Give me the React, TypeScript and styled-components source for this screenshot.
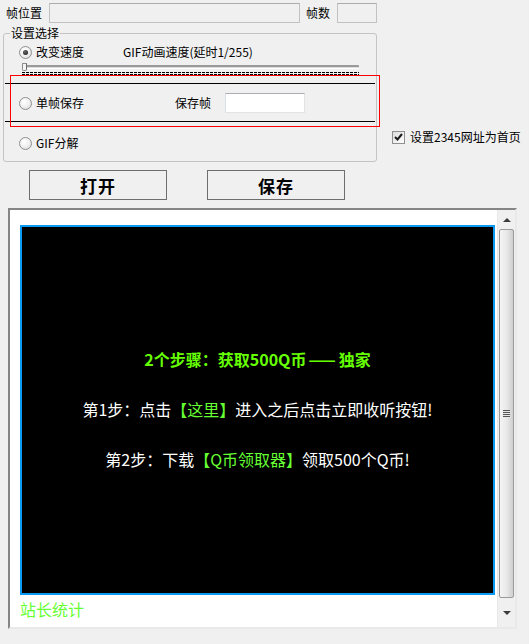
import React from 'react'
import styled, { createGlobalStyle } from 'styled-components'

const GlobalStyle = createGlobalStyle`
  html, body {
    margin: 0;
    padding: 0;
    background: #f0f0f0;
  }
  body {
    font-family: "Noto Sans CJK SC", "Liberation Sans", sans-serif;
    font-size: 12px;
    color: #000;
  }
  #root {
    width: 529px;
    height: 644px;
    overflow: hidden;
  }
`

const Window = styled.div`
  position: relative;
  width: 529px;
  height: 644px;
  padding-top: 3px;
  box-sizing: border-box;
  display: flex;
  flex-direction: column;
  background: #f0f0f0;
`

const TopRow = styled.div`
  display: flex;
  align-items: center;
  height: 20px;
  padding-left: 6px;
`

const Label = styled.span<{ $width?: number; $gap?: number }>`
  display: inline-block;
  width: ${({ $width }) => ($width ? `${$width}px` : 'auto')};
  margin-left: ${({ $gap }) => $gap ?? 0}px;
  flex: none;
  font-size: 12px;
  line-height: 16px;
  white-space: nowrap;
`

const ReadOnlyField = styled.div<{ $width: number }>`
  width: ${({ $width }) => $width}px;
  height: 20px;
  box-sizing: border-box;
  border: 1px solid #c2c2c2;
  border-top-color: #adadad;
  background: #f0f0f0;
  flex: none;
`

const Middle = styled.div`
  display: flex;
  margin-top: 3px;
  padding-left: 3px;
`

const GroupBox = styled.fieldset`
  margin: 0;
  padding: 0 0 10px;
  width: 374px;
  box-sizing: border-box;
  border: 1px solid #c4c4c4;
  border-radius: 3px;
  display: flex;
  flex-direction: column;

  & > legend {
    margin-left: 6px;
    padding: 0 1px;
    font-size: 12px;
    line-height: 14px;
  }
`

const OptionRow = styled.div<{ $top: number; $height: number }>`
  display: flex;
  align-items: center;
  height: ${({ $height }) => $height}px;
  margin-top: ${({ $top }) => $top}px;
  padding-left: 15px;
`

const RadioLabel = styled.label<{ $width?: number }>`
  display: flex;
  align-items: center;
  gap: 4px;
  width: ${({ $width }) => ($width ? `${$width}px` : 'auto')};
  flex: none;
  line-height: 16px;
`

const RadioCircle = styled.span<{ $checked?: boolean }>`
  position: relative;
  width: 13px;
  height: 13px;
  box-sizing: border-box;
  border-radius: 50%;
  border: 1px solid #8f8f8f;
  background: radial-gradient(circle at 40% 35%, #ffffff 0%, #f2f2f2 45%, #d4d4d4 100%);
  flex: none;

  &::after {
    content: '';
    display: ${({ $checked }) => ($checked ? 'block' : 'none')};
    position: absolute;
    left: 3px;
    top: 3px;
    width: 5px;
    height: 5px;
    border-radius: 50%;
    background: radial-gradient(circle at 40% 35%, #6a6a6a, #111);
  }
`

const Slider = styled.div`
  position: relative;
  margin: 2px 0 0 18px;
  width: 337px;
  height: 14px;
`

const SliderTrack = styled.div`
  position: absolute;
  left: 0;
  right: 0;
  top: 3px;
  height: 4px;
  box-sizing: border-box;
  border-top: 2px solid #9a9a9a;
  border-bottom: 1px solid #ffffff;
  background: #dcdcdc;
  border-radius: 1px;
`

const SliderThumb = styled.div`
  position: absolute;
  left: 0;
  top: 1px;
  width: 5px;
  height: 8px;
  box-sizing: border-box;
  border: 1px solid #8a8a8a;
  border-right-color: #6a6a6a;
  background: #f4f4f4;
  border-radius: 1px 1px 2px 2px;
`

const SliderTicks = styled.div`
  position: absolute;
  left: 0;
  right: 0;
  top: 10px;
  height: 3px;
  background:
    repeating-linear-gradient(90deg, #000 0 3px, transparent 3px 4px) 0 0 / 100% 1px no-repeat,
    repeating-linear-gradient(90deg, #000 0 3px, transparent 3px 4px) 0 2px / 100% 1px no-repeat;
`

const Separator = styled.div<{ $top: number }>`
  height: 1px;
  margin: ${({ $top }) => $top}px 0 0 1px;
  width: 370px;
  background: #000;
`

const EditField = styled.div`
  width: 80px;
  height: 20px;
  box-sizing: border-box;
  border: 1px solid #e3e3e3;
  border-top-color: #abadb3;
  border-left-color: #dbdfe6;
  background: #fff;
  flex: none;
`

const CheckOption = styled.label`
  align-self: flex-end;
  display: flex;
  align-items: center;
  gap: 5px;
  margin: 0 0 18px 15px;
  line-height: 14px;
  white-space: nowrap;
`

const CheckBoxBox = styled.span`
  display: flex;
  align-items: center;
  justify-content: center;
  width: 13px;
  height: 13px;
  box-sizing: border-box;
  border: 1px solid #8f8f8f;
  background: linear-gradient(135deg, #dcdcdc, #ffffff);
  flex: none;
`

const ButtonRow = styled.div`
  display: flex;
  gap: 40px;
  margin-top: 8px;
  padding-left: 29px;
`

const PushButton = styled.button`
  width: 138px;
  height: 30px;
  box-sizing: border-box;
  border: 1px solid #6e6e6e;
  background: #f0f0f0;
  font-family: "Noto Sans CJK SC", sans-serif;
  font-size: 17px;
  font-weight: 600;
  color: #000;
  letter-spacing: 1px;
  padding: 0;
`

const BrowserFrame = styled.div`
  display: flex;
  margin: 8px 0 0 8px;
  width: 509px;
  height: 421px;
  box-sizing: border-box;
  border: 2px solid;
  border-color: #858585 #e9e9e9 #e9e9e9 #858585;
  background: #fff;
`

const PageArea = styled.div`
  flex: 1;
  padding: 15px 0 0 10px;
  display: flex;
  flex-direction: column;
`

const Banner = styled.div`
  width: 475px;
  height: 370px;
  box-sizing: border-box;
  border: 2px solid #0a9af5;
  background: #000;
  padding-top: 122px;
  display: flex;
  flex-direction: column;
  align-items: center;
  gap: 30px;
`

const BannerLine = styled.p<{ $bold?: boolean }>`
  margin: 0;
  font-size: 16px;
  line-height: 20px;
  font-weight: ${({ $bold }) => ($bold ? 700 : 400)};
  color: ${({ $bold }) => ($bold ? '#66ff00' : '#fff')};
  white-space: nowrap;
`

const Dashes = styled.span`
  letter-spacing: 3px;
  margin-left: 2px;
`

const Highlight = styled.span`
  color: #66ff33;
`

const StatsLink = styled.span`
  margin-top: 4px;
  font-size: 16px;
  line-height: 20px;
  color: #66ff33;
`

const ScrollBar = styled.div`
  width: 17px;
  display: flex;
  flex-direction: column;
  background: #f0f0f0;
  border-left: 1px solid #e8e8e8;
`

const ScrollArrow = styled.div<{ $down?: boolean }>`
  height: 19px;
  display: flex;
  align-items: center;
  justify-content: center;
  flex: ${({ $down }) => ($down ? 1 : 'none')};

  &::before {
    content: '';
    width: 0;
    height: 0;
    border-left: 4px solid transparent;
    border-right: 4px solid transparent;
    ${({ $down }) =>
      $down ? 'border-top: 4px solid #3c3c3c;' : 'border-bottom: 4px solid #3c3c3c;'}
  }
`

const ScrollThumb = styled.div`
  height: 369px;
  margin: 0 1px;
  box-sizing: border-box;
  border: 1px solid #9b9b9b;
  border-radius: 2px;
  background: linear-gradient(90deg, #f4f4f4 0%, #e9e9e9 50%, #cfcfcf 100%);
  display: flex;
  align-items: center;
  justify-content: center;
  flex: none;
`

const Grip = styled.div`
  width: 7px;
  height: 8px;
  background: repeating-linear-gradient(180deg, #555 0 1px, #e8e8e8 1px 2px);
`

const Annotation = styled.div`
  position: absolute;
  left: 10px;
  top: 75px;
  width: 370px;
  height: 52px;
  box-sizing: border-box;
  border: 1px solid #ff0000;
  pointer-events: none;
`

function App(): React.ReactElement {
  return (
    <>
      <GlobalStyle />
      <Window>
        <TopRow>
          <Label $width={43}>帧位置</Label>
          <ReadOnlyField $width={251} />
          <Label $width={31} $gap={6}>帧数</Label>
          <ReadOnlyField $width={40} />
        </TopRow>

        <Middle>
          <GroupBox>
            <legend>设置选择</legend>
            <OptionRow $top={4} $height={16}>
              <RadioLabel $width={104}>
                <RadioCircle $checked />
                改变速度
              </RadioLabel>
              <Label>GIF动画速度(延时1/255)</Label>
            </OptionRow>
            <Slider>
              <SliderTrack />
              <SliderThumb />
              <SliderTicks />
            </Slider>
            <Separator $top={7} />
            <OptionRow $top={9} $height={20}>
              <RadioLabel $width={156}>
                <RadioCircle />
                单帧保存
              </RadioLabel>
              <Label $width={50}>保存帧</Label>
              <EditField />
            </OptionRow>
            <Separator $top={8} />
            <OptionRow $top={13} $height={16}>
              <RadioLabel>
                <RadioCircle />
                GIF分解
              </RadioLabel>
            </OptionRow>
          </GroupBox>

          <CheckOption>
            <CheckBoxBox>
              <svg width="9" height="8" viewBox="0 0 9 8">
                <path d="M1 4 L3.5 6.5 L8 1" fill="none" stroke="#1c1c1c" strokeWidth="2" />
              </svg>
            </CheckBoxBox>
            设置2345网址为首页
          </CheckOption>
        </Middle>

        <ButtonRow>
          <PushButton>打开</PushButton>
          <PushButton>保存</PushButton>
        </ButtonRow>

        <BrowserFrame>
          <PageArea>
            <Banner>
              <BannerLine $bold>
                2个步骤：获取500Q币<Dashes>——</Dashes>独家
              </BannerLine>
              <BannerLine>
                第1步：点击<Highlight>【这里】</Highlight>进入之后点击立即收听按钮!
              </BannerLine>
              <BannerLine>
                第2步：下载<Highlight>【Q币领取器】</Highlight>领取500个Q币!
              </BannerLine>
            </Banner>
            <StatsLink>站长统计</StatsLink>
          </PageArea>
          <ScrollBar>
            <ScrollArrow />
            <ScrollThumb>
              <Grip />
            </ScrollThumb>
            <ScrollArrow $down />
          </ScrollBar>
        </BrowserFrame>

        <Annotation />
      </Window>
    </>
  )
}

export default App
